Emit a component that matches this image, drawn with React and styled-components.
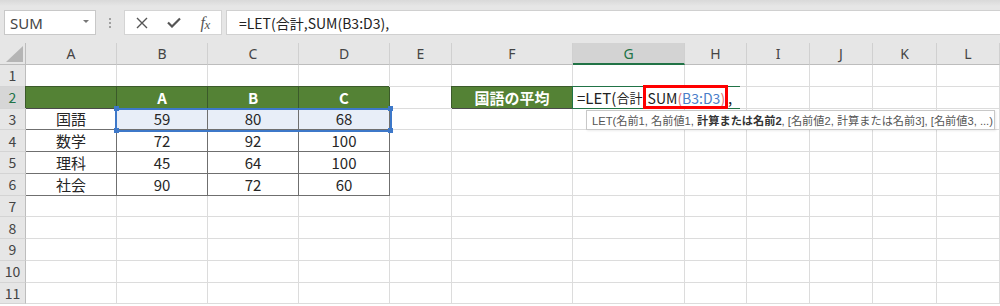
import React from "react";
import styled, { createGlobalStyle, css } from "styled-components";

const GlobalStyle = createGlobalStyle`
  html, body { margin: 0; padding: 0; background: #fff; }
  body { font-family: "Noto Sans CJK JP", "Noto Sans", sans-serif; overflow: hidden; }
  * { box-sizing: border-box; }
`;

const COLS = [26, 91, 91, 91, 91, 62, 121, 112, 62, 63, 63, 64, 63];
const LETTERS = ["A", "B", "C", "D", "E", "F", "G", "H", "I", "J", "K", "L"];

const Page = styled.div`
  width: 1000px;
  height: 306px;
  overflow: hidden;
  background: #fff;
`;

const Toolbar = styled.div`
  height: 43px;
  display: flex;
  align-items: flex-start;
  padding: 10px 0 0 4px;
  background: linear-gradient(#d9d9d9 0, #e6e6e6 6px, #e6e6e6 100%);
`;

const NameBox = styled.div`
  width: 92px;
  height: 25px;
  background: #fff;
  border: 1px solid #c8c8c8;
  display: flex;
  align-items: center;
  justify-content: space-between;
  padding: 0 6px 0 5px;
  font-family: "Noto Sans", sans-serif;
  font-size: 15px;
  color: #444;
`;

const Caret = styled.span`
  width: 0;
  height: 0;
  border-left: 3px solid transparent;
  border-right: 3px solid transparent;
  border-top: 3px solid #777;
  margin-top: -3px;
`;

const Grip = styled.div`
  width: 28px;
  height: 25px;
  display: flex;
  flex-direction: column;
  align-items: center;
  justify-content: center;
  gap: 2px;

  span {
    width: 2px;
    height: 2px;
    background: #a0a0a0;
  }
`;

const ButtonGroup = styled.div`
  width: 98px;
  height: 25px;
  background: #fff;
  border: 1px solid #d4d4d4;
  display: flex;
  align-items: center;
  padding-left: 1px;
`;

const IconButton = styled.div`
  width: 32px;
  height: 23px;
  display: flex;
  align-items: center;
  justify-content: center;
  color: #555;
`;

const Fx = styled.span`
  font-family: "Liberation Serif", serif;
  font-style: italic;
  font-size: 16px;
  color: #555;
  letter-spacing: -0.5px;

  small {
    font-size: 13px;
    position: relative;
    top: 1px;
  }
`;

const FormulaBox = styled.div`
  flex: 1;
  height: 25px;
  margin-left: 4px;
  background: #fff;
  border: 1px solid #d0d0d0;
  border-right: none;
  display: flex;
  align-items: center;
  padding-left: 12px;
  font-size: 14px;
  color: #222;
  white-space: nowrap;
`;

const Sheet = styled.div`
  position: relative;
  display: grid;
  grid-template-columns: ${COLS.map((w) => w + "px").join(" ")};
  grid-template-rows: 22px repeat(11, 21.75px);
`;

const Corner = styled.div`
  background: #e6e6e6;
  border-right: 1px solid #bdbdbd;
  border-bottom: 1px solid #bdbdbd;
  display: flex;
  align-items: flex-end;
  justify-content: flex-end;
  padding: 0 2px 2px 0;
`;

const ColHead = styled.div`
  background: ${(p) => (p.$active ? "#d3d3d3" : "#e6e6e6")};
  color: ${(p) => (p.$active ? "#217346" : "#444")};
  border-right: 1px solid #d0d0d0;
  border-bottom: ${(p) => (p.$active ? "2px solid #217346" : "1px solid #bdbdbd")};
  display: flex;
  align-items: center;
  justify-content: center;
  font-family: "Noto Sans", sans-serif;
  font-size: 14px;
  padding-top: ${(p) => (p.$active ? "1px" : "0")};
`;

const RowHead = styled.div`
  background: ${(p) => (p.$active ? "#d6d6d6" : "#e6e6e6")};
  color: ${(p) => (p.$active ? "#217346" : "#444")};
  border-right: 1px solid #bdbdbd;
  border-bottom: 1px solid #d4d4d4;
  display: flex;
  align-items: center;
  justify-content: center;
  font-size: 14px;
`;

const lineColor = {
  plain: "#dcdcdc",
  green: "#3b5a2a",
  table: "#6f6f6f",
};

const Cell = styled.div`
  border-right: 1px solid ${(p) => lineColor[p.$kind]};
  border-bottom: 1px solid ${(p) => (p.$kind === "green" ? "#4a4a4a" : lineColor[p.$kind])};
  background: ${(p) =>
    p.$kind === "green" ? "#548235" : p.$selected ? "#e8eef8" : "#fff"};
  color: ${(p) => (p.$kind === "green" ? "#fff" : "#262626")};
  font-weight: ${(p) => (p.$kind === "green" ? 700 : 400)};
  font-size: 15px;
  display: flex;
  align-items: center;
  justify-content: center;
  white-space: nowrap;
  ${(p) =>
    p.$kind === "green" &&
    css`
      box-shadow: -1px -1px 0 #3b5a2a;
    `}
`;

const Selection = styled.div`
  position: absolute;
  left: 115px;
  top: 64.5px;
  width: 277px;
  height: 24px;
  border: 2px solid #3d78c9;
  pointer-events: none;
  z-index: 2;
`;

const Handle = styled.div`
  position: absolute;
  width: 5px;
  height: 5px;
  background: #3d78c9;
  z-index: 3;
  left: ${(p) => p.$x - 2.5}px;
  top: ${(p) => p.$y - 2.5}px;
`;

const Editor = styled.div`
  position: absolute;
  left: 572px;
  top: 43px;
  width: 168px;
  height: 23px;
  background: #fff;
  border: 1px solid #217346;
  border-right: none;
  display: flex;
  align-items: center;
  padding-left: 4px;
  font-size: 15px;
  color: #222;
  white-space: nowrap;
  z-index: 2;
`;

const Kanji = styled.span`
  font-size: 13px;
`;

const Arg = styled.span`
  font-size: 14px;
  margin-left: 1px;
`;

const Comma = styled.span`
  margin-left: 3px;
`;

const Ref = styled.span`
  color: ${(p) => (p.$paren ? "#e0716f" : "#4a7ec9")};
`;

const RedBox = styled.div`
  position: absolute;
  left: 643px;
  top: 42px;
  width: 85px;
  height: 24px;
  border: 3px solid #ff0000;
  pointer-events: none;
  z-index: 4;
`;

const Tooltip = styled.div`
  position: absolute;
  left: 586px;
  top: 67px;
  width: 409px;
  height: 20px;
  background: #fff;
  border: 1px solid #c8c8c8;
  box-shadow: 1px 1px 2px rgba(0, 0, 0, 0.08);
  display: flex;
  align-items: center;
  padding-left: 5px;
  font-family: "Liberation Sans", "Noto Sans CJK JP", sans-serif;
  font-size: 11.2px;
  color: #555;
  white-space: pre;
  z-index: 2;

  b {
    color: #333;
    font-weight: 700;
  }
`;

const green = (text = "") => ({ kind: "green", text });
const plain = (text = "") => ({ kind: "plain", text });
const table = (text, selected) => ({ kind: "table", text, selected });

const blankRow = () => LETTERS.map(() => plain());

const subjects = [
  ["国語", "59", "80", "68"],
  ["数学", "72", "92", "100"],
  ["理科", "45", "64", "100"],
  ["社会", "90", "72", "60"],
];

const rows = [
  blankRow(),
  [green(), green("A"), green("B"), green("C"), plain(), green("国語の平均"), ...Array.from({ length: 6 }, () => plain())],
  ...subjects.map((r, i) => [
    table(r[0]),
    table(r[1], i === 0),
    table(r[2], i === 0),
    table(r[3], i === 0),
    ...Array.from({ length: 8 }, () => plain()),
  ]),
  blankRow(),
  blankRow(),
  blankRow(),
  blankRow(),
  blankRow(),
];

function App() {
  return (
    <Page>
      <GlobalStyle />
      <Toolbar>
        <NameBox>
          SUM
          <Caret />
        </NameBox>
        <Grip>
          <span />
          <span />
          <span />
        </Grip>
        <ButtonGroup>
          <IconButton>
            <svg width="12" height="12" viewBox="0 0 12 12">
              <path d="M1 1 L11 11 M11 1 L1 11" stroke="#555" strokeWidth="1.4" fill="none" />
            </svg>
          </IconButton>
          <IconButton>
            <svg width="14" height="11" viewBox="0 0 14 11">
              <path d="M1 5.5 L5 9.5 L13 1.5" stroke="#555" strokeWidth="2.2" fill="none" />
            </svg>
          </IconButton>
          <IconButton>
            <Fx>
              f<small>x</small>
            </Fx>
          </IconButton>
        </ButtonGroup>
        <FormulaBox>=LET(合計,SUM(B3:D3),</FormulaBox>
      </Toolbar>

      <Sheet>
        <Corner>
          <svg width="17" height="16" viewBox="0 0 17 16">
            <polygon points="17,0 17,16 0,16" fill="#b5b5b5" />
          </svg>
        </Corner>
        {LETTERS.map((l) => (
          <ColHead key={l} $active={l === "G"}>
            {l}
          </ColHead>
        ))}
        {rows.map((row, r) => (
          <React.Fragment key={r}>
            <RowHead $active={r === 1}>{r + 1}</RowHead>
            {row.map((c, i) => (
              <Cell key={i} $kind={c.kind} $selected={c.selected}>
                {c.text}
              </Cell>
            ))}
          </React.Fragment>
        ))}

        <Selection />
        <Handle $x={116} $y={65.5} />
        <Handle $x={390} $y={65.5} />
        <Handle $x={116} $y={87.5} />
        <Handle $x={390} $y={87.5} />

        <Editor>
          =LET(<Kanji>合計</Kanji>,
          <Arg>
            SUM<Ref $paren>(</Ref>
            <Ref>B3:D3</Ref>
            <Ref $paren>)</Ref>
          </Arg>
          <Comma>,</Comma>
        </Editor>
        <RedBox />

        <Tooltip>
          {"LET(名前1, 名前値1, "}
          <b>計算または名前2</b>
          {", [名前値2, 計算または名前3], [名前値3, ...)"}
        </Tooltip>
      </Sheet>
    </Page>
  );
}

export default App;
